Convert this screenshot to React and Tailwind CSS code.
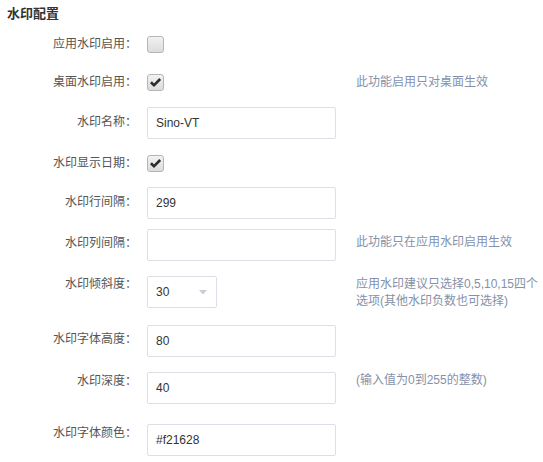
import React from 'react'

const font = { fontFamily: '"Liberation Sans", "Noto Sans CJK SC", sans-serif' }

function Checkbox({ checked }) {
    return (
        <div className="w-[17px] h-[17px] rounded-[3px] border border-[#b5b5b5] bg-gradient-to-b from-[#f2f2f2] to-[#dcdcdc] flex items-center justify-center">
            {checked && (
                <svg width="13" height="11" viewBox="0 0 13 11">
                    <path d="M1 6.2 L2.9 4.3 L5 6.4 L10.2 1 L12.1 2.9 L5 10 Z" fill="#2b2b2b" />
                </svg>
            )}
        </div>
    )
}

function TextInput({ value }) {
    return (
        <div className="w-[189px] h-[32px] border border-[#dcdfe6] rounded-[2px] bg-white pl-[8px] flex items-center text-[12px] text-[#333]">
            {value}
        </div>
    )
}

function Select({ value }) {
    return (
        <div className="w-[70px] h-[32px] border border-[#dcdfe6] rounded-[2px] bg-white pl-[8px] pr-[9px] flex items-center justify-between text-[12px] text-[#333]">
            <span>{value}</span>
            <svg width="8" height="5" viewBox="0 0 8 5">
                <path d="M0 0 L8 0 L4 4.5 Z" fill="#c8ccd4" />
            </svg>
        </div>
    )
}

function Row({ label, labelClass = '', mt, children, help, helpClass = '' }) {
    return (
        <div className={`flex items-start ${mt}`}>
            <div className={`w-[137px] shrink-0 text-right text-[12px] leading-[17px] text-[#555] ${labelClass}`}>{label}</div>
            <div className="ml-[10px] w-[189px] shrink-0">{children}</div>
            {help && (
                <div className={`ml-[20px] whitespace-nowrap text-[12px] leading-[17px] text-[#8491a9] ${helpClass}`}>{help}</div>
            )}
        </div>
    )
}

export default function App() {
    return (
        <div className="w-[543px] h-[462px] bg-white overflow-hidden" style={font}>
            <div className="pl-[7px] pt-[5px] text-[13px] leading-[18px] font-bold text-[#333]">水印配置</div>

            <Row label="应用水印启用：" mt="mt-[13px]">
                <Checkbox />
            </Row>
            <Row label="桌面水印启用：" mt="mt-[21px]" help="此功能启用只对桌面生效">
                <Checkbox checked />
            </Row>
            <Row label="水印名称：" labelClass="pt-[7px]" mt="mt-[16px]">
                <TextInput value="Sino-VT" />
            </Row>
            <Row label="水印显示日期：" mt="mt-[16px]">
                <Checkbox checked />
            </Row>
            <Row label="水印行间隔：" labelClass="pt-[7px]" mt="mt-[15px]">
                <TextInput value="299" />
            </Row>
            <Row label="水印列间隔：" labelClass="pt-[6px]" mt="mt-[10px]" help="此功能只在应用水印启用生效" helpClass="pt-[5px]">
                <TextInput value="" />
            </Row>
            <div className="h-[32px] mt-[15px]">
                <Row label="水印倾斜度：" mt="mt-0" help={<>应用水印建议只选择0,5,10,15四个<br />选项(其他水印负数也可选择)</>}>
                    <Select value="30" />
                </Row>
            </div>
            <Row label="水印字体高度：" labelClass="pt-[6px]" mt="mt-[17px]">
                <TextInput value="80" />
            </Row>
            <Row label="水印深度：" labelClass="pt-[1px]" mt="mt-[15px]" help="(输入值为0到255的整数)">
                <TextInput value="40" />
            </Row>
            <Row label="水印字体颜色：" labelClass="pt-[1px]" mt="mt-[20px]">
                <TextInput value="#f21628" />
            </Row>
        </div>
    )
}
